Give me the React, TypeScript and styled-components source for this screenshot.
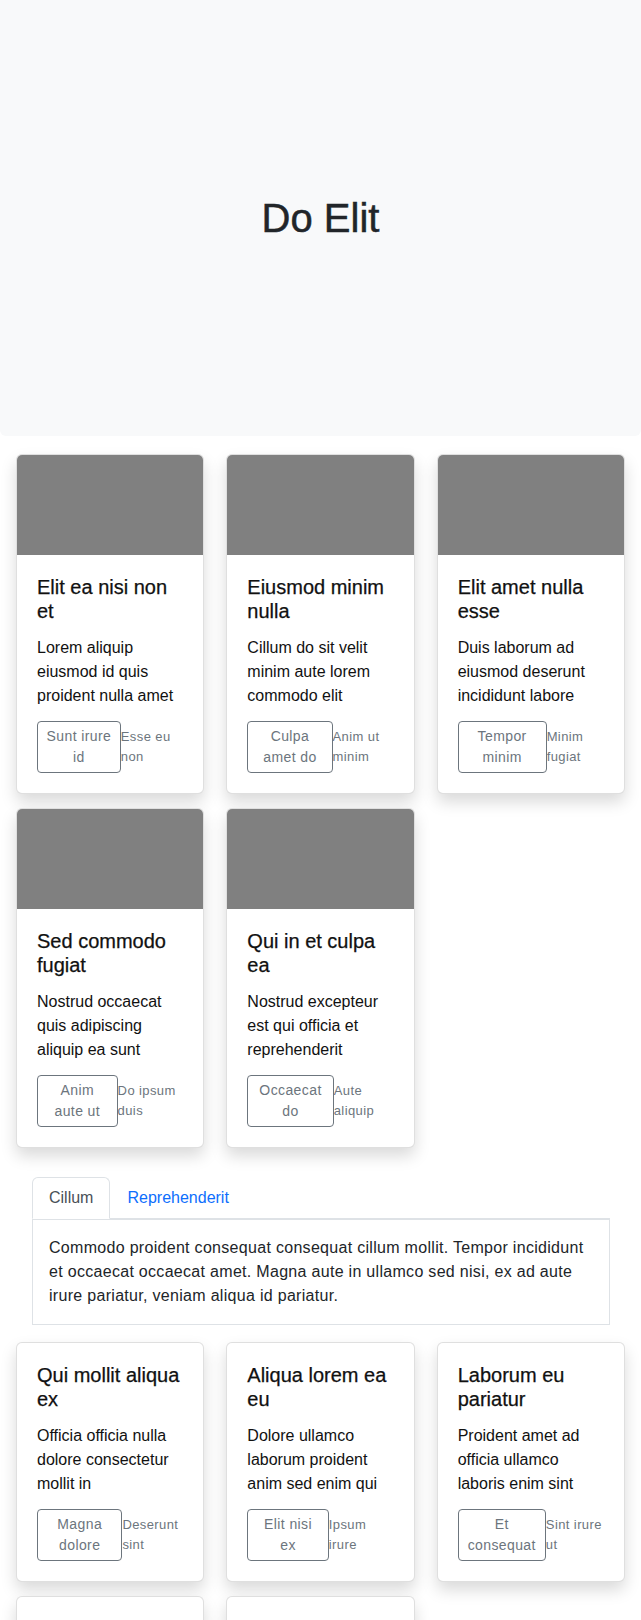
import React, { useState } from "react";
import styled, { createGlobalStyle } from "styled-components";

const GlobalStyle = createGlobalStyle`
  * { box-sizing: border-box; }
  html, body { margin: 0; padding: 0; background: #fff; }
  body {
    font-family: "Liberation Sans", Arial, Helvetica, sans-serif;
    font-size: 16px;
    line-height: 1.5;
    color: #212529;
  }
`;

const Page = styled.div`
  display: flex;
  flex-direction: column;
  padding-bottom: 40px;
`;

const Hero = styled.header`
  height: 436px;
  background: #f8f9fa;
  border-radius: 0 0 6px 6px;
  display: flex;
  align-items: center;
  justify-content: center;
`;

const HeroTitle = styled.h1`
  margin: 0;
  font-size: 40px;
  font-weight: 500;
  line-height: 1.2;
  color: #212529;
  -webkit-text-stroke: 0.5px #212529;
`;

const CardGrid = styled.section<{ $top: number }>`
  display: grid;
  grid-template-columns: repeat(3, 1fr);
  column-gap: 22px;
  row-gap: 14px;
  padding: 0 16px;
  margin-top: ${(p) => p.$top}px;
`;

const Card = styled.article`
  display: flex;
  flex-direction: column;
  background: #fff;
  border: 1px solid rgba(0, 0, 0, 0.125);
  border-radius: 6px;
  box-shadow: 0 8px 16px rgba(0, 0, 0, 0.15);
  overflow: hidden;
`;

const CardImage = styled.div`
  height: 100px;
  background: #808080;
`;

const CardBody = styled.div`
  padding: 20px;
`;

const CardTitle = styled.h5`
  margin: 0 0 13px;
  font-size: 20px;
  font-weight: 500;
  line-height: 24px;
  color: #111;
  -webkit-text-stroke: 0.25px #111;
`;

const CardText = styled.p`
  margin: 0 0 13px;
  font-size: 16px;
  line-height: 24px;
  color: #111;
`;

const Actions = styled.div`
  display: flex;
  align-items: baseline;
`;

const OutlineButton = styled.button`
  font-family: inherit;
  font-size: 14px;
  line-height: 21px;
  letter-spacing: 0.4px;
  padding: 4px 8px;
  border: 1px solid #6c757d;
  border-radius: 4px;
  background: transparent;
  color: #6c757d;
  text-align: center;
  cursor: pointer;
`;

const Muted = styled.small`
  font-size: 13px;
  line-height: 19.5px;
  letter-spacing: 0.4px;
  color: #6c757d;
`;

const TabsBlock = styled.section`
  margin: 29px 31px 0 32px;
`;

const TabList = styled.div`
  display: flex;
  border-bottom: 1px solid #dee2e6;
`;

const Tab = styled.button<{ $active: boolean }>`
  font-family: inherit;
  font-size: 16px;
  line-height: 24px;
  padding: 8px 16px;
  margin-bottom: -1px;
  border: 1px solid transparent;
  border-radius: 6px 6px 0 0;
  background: ${(p) => (p.$active ? "#fff" : "transparent")};
  border-color: ${(p) => (p.$active ? "#dee2e6 #dee2e6 #fff" : "transparent")};
  color: ${(p) => (p.$active ? "#495057" : "#0d6efd")};
  cursor: pointer;
`;

const TabPanel = styled.div`
  border: 1px solid #dee2e6;
  padding: 16px;
  font-size: 16px;
  line-height: 24px;
  letter-spacing: 0.3px;
  color: #212529;
`;

type CardData = {
  title: string;
  text: string;
  button: string;
  note: string;
};

const firstCards: CardData[] = [
  { title: "Elit ea nisi non et", text: "Lorem aliquip eiusmod id quis proident nulla amet", button: "Sunt irure id", note: "Esse eu non" },
  { title: "Eiusmod minim nulla", text: "Cillum do sit velit minim aute lorem commodo elit", button: "Culpa amet do", note: "Anim ut minim" },
  { title: "Elit amet nulla esse", text: "Duis laborum ad eiusmod deserunt incididunt labore", button: "Tempor minim", note: "Minim fugiat" },
  { title: "Sed commodo fugiat", text: "Nostrud occaecat quis adipiscing aliquip ea sunt", button: "Anim aute ut", note: "Do ipsum duis" },
  { title: "Qui in et culpa ea", text: "Nostrud excepteur est qui officia et reprehenderit", button: "Occaecat do", note: "Aute aliquip" },
];

const secondCards: CardData[] = [
  { title: "Qui mollit aliqua ex", text: "Officia officia nulla dolore consectetur mollit in", button: "Magna dolore", note: "Deserunt sint" },
  { title: "Aliqua lorem ea eu", text: "Dolore ullamco laborum proident anim sed enim qui", button: "Elit nisi ex", note: "Ipsum irure" },
  { title: "Laborum eu pariatur", text: "Proident amet ad officia ullamco laboris enim sint", button: "Et consequat", note: "Sint irure ut" },
  { title: "Ullamco dolor elit", text: "Velit labore mollit sint nulla cupidatat sunt", button: "Irure duis", note: "Nisi amet" },
  { title: "Lorem fugiat do", text: "Aliquip esse tempor ea labore elit nostrud", button: "Velit anim", note: "Esse sint" },
];

const tabs = [
  {
    label: "Cillum",
    body: "Commodo proident consequat consequat cillum mollit. Tempor incididunt et occaecat occaecat amet. Magna aute in ullamco sed nisi, ex ad aute irure pariatur, veniam aliqua id pariatur.",
  },
  {
    label: "Reprehenderit",
    body: "Reprehenderit laboris aliqua velit nulla officia. Sunt esse irure dolore aute exercitation.",
  },
];

function InfoCard({ data, image }: { data: CardData; image: boolean }) {
  return (
    <Card>
      {image && <CardImage />}
      <CardBody>
        <CardTitle>{data.title}</CardTitle>
        <CardText>{data.text}</CardText>
        <Actions>
          <OutlineButton type="button">{data.button}</OutlineButton>
          <Muted>{data.note}</Muted>
        </Actions>
      </CardBody>
    </Card>
  );
}

export default function App() {
  const [active, setActive] = useState(0);
  return (
    <Page>
      <GlobalStyle />
      <Hero>
        <HeroTitle>Do Elit</HeroTitle>
      </Hero>
      <CardGrid $top={18}>
        {firstCards.map((c) => (
          <InfoCard key={c.title} data={c} image />
        ))}
      </CardGrid>
      <TabsBlock>
        <TabList>
          {tabs.map((t, i) => (
            <Tab key={t.label} $active={i === active} onClick={() => setActive(i)} type="button">
              {t.label}
            </Tab>
          ))}
        </TabList>
        <TabPanel>{tabs[active].body}</TabPanel>
      </TabsBlock>
      <CardGrid $top={17}>
        {secondCards.map((c) => (
          <InfoCard key={c.title} data={c} image={false} />
        ))}
      </CardGrid>
    </Page>
  );
}
